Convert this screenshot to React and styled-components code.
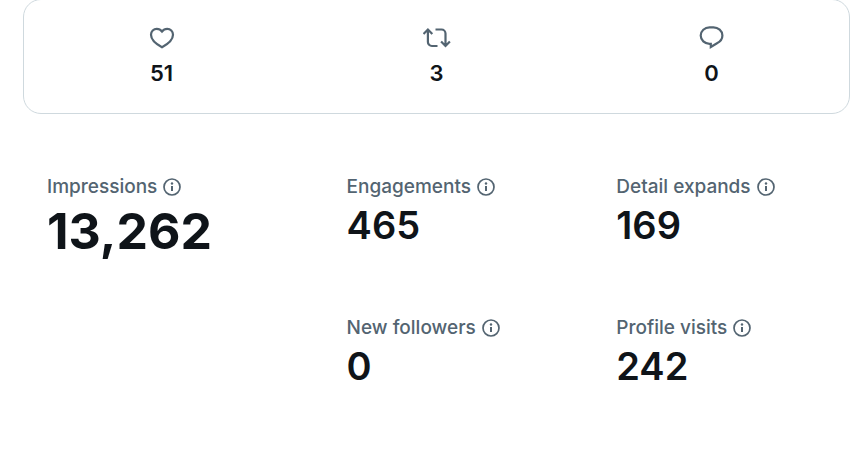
import React from "react"
import styled, { createGlobalStyle, css } from "styled-components"

const colors = {
    text: "#0f1419",
    muted: "#536471",
    border: "#cfd9de",
}

const GlobalStyle = createGlobalStyle`
    * {
        box-sizing: border-box;
    }

    body {
        margin: 0;
        background: #fff;
        color: ${colors.text};
        font-family: Inter, "Liberation Sans", sans-serif;
    }
`

const Page = styled.main`
    display: flow-root;
    padding: 0 18px 48px 23px;
`

const TotalsCard = styled.ul`
    display: grid;
    grid-template-columns: repeat(3, 1fr);
    margin: -1px 0 0;
    padding: 24px 0 26px;
    list-style: none;
    border: 1px solid ${colors.border};
    border-radius: 18px;
`

const Total = styled.li`
    display: flex;
    flex-direction: column;
    align-items: center;
    gap: 7px;
    font-size: 22px;
    font-weight: 600;
    line-height: 28px;
`

const TotalIcon = styled.svg`
    display: block;
    width: 28px;
    height: 28px;
    fill: none;
    stroke: ${colors.muted};
    stroke-width: 2.2;
`

const Metrics = styled.dl`
    display: grid;
    grid-template-columns: 10fr 9fr 7fr;
    row-gap: 66px;
    margin: 0;
    padding: 60px 24px 0;
`

const Metric = styled.div`
    ${({ $large }) =>
        $large &&
        css`
            grid-row: span 2;
        `}
`

const MetricLabel = styled.dt`
    display: flex;
    align-items: center;
    gap: 6px;
    color: ${colors.muted};
    font-size: 19px;
    font-weight: 500;
    line-height: 25px;
    white-space: nowrap;
`

const InfoButton = styled.button`
    display: flex;
    padding: 0;
    border: 0;
    background: none;
    color: inherit;
    cursor: pointer;

    svg {
        width: 18px;
        height: 18px;
    }
`

const MetricValue = styled.dd`
    margin: 2px 0 0;
    font-size: ${({ $large }) => ($large ? "50px" : "38px")};
    font-weight: ${({ $large }) => ($large ? 700 : 600)};
    line-height: ${({ $large }) => ($large ? "60px" : "48px")};
`

const HeartIcon = () => (
    <TotalIcon viewBox="0 0 28 28" role="img" aria-label="Likes">
        <path d="M14 7.500C12.600 5.600 10.800 4.800 8.800 4.800 5.600 4.800 3 7.400 3 10.800c0 5.200 5.500 9.500 11 12.500 5.500-3 11-7.300 11-12.500 0-3.400-2.600-6-5.800-6-2 0-3.800.8-5.200 2.700z" />
    </TotalIcon>
)

const RepostIcon = () => (
    <TotalIcon viewBox="0 0 28 28" role="img" aria-label="Reposts">
        <path d="M.5 10 4.900 5.500l4.400 4.500M4.900 6V18a4 4 0 0 0 4 4H14.500M12.500 5.500h6a4 4 0 0 1 4 4v12M18.100 17.500l4.400 4.500 4.400-4.500" />
    </TotalIcon>
)

const ReplyIcon = () => (
    <TotalIcon viewBox="0 0 28 28" role="img" aria-label="Replies">
        <path d="M11.500 3.300h4c4.600 0 8.900 3.600 8.900 8.200 0 3.400-2.300 6.200-5.400 7.700L12.800 23v-3.200h-1.300C6.700 19.800 2.700 16.100 2.700 11.600s4-8.300 8.800-8.300z" />
    </TotalIcon>
)

const InfoIcon = () => (
    <svg viewBox="0 0 18 18" aria-hidden="true">
        <circle
            cx="9"
            cy="9"
            r="8"
            fill="none"
            stroke="currentColor"
            strokeWidth="1.7"
        />
        <circle cx="9" cy="5.5" r="1.2" fill="currentColor" />
        <path d="M8 8h2v5H8z" fill="currentColor" />
    </svg>
)

const totals = [
    { id: "likes", Icon: HeartIcon, value: "51" },
    { id: "reposts", Icon: RepostIcon, value: "3" },
    { id: "replies", Icon: ReplyIcon, value: "0" },
]

const metrics = [
    { label: "Impressions", value: "13,262", large: true },
    { label: "Engagements", value: "465" },
    { label: "Detail expands", value: "169" },
    { label: "New followers", value: "0" },
    { label: "Profile visits", value: "242" },
]

const App = () => {
    return (
        <>
            <GlobalStyle />
            <Page>
                <TotalsCard>
                    {totals.map(({ id, Icon, value }) => (
                        <Total key={id}>
                            <Icon />
                            <span>{value}</span>
                        </Total>
                    ))}
                </TotalsCard>
                <Metrics>
                    {metrics.map(({ label, value, large }) => (
                        <Metric key={label} $large={large}>
                            <MetricLabel>
                                {label}
                                <InfoButton
                                    type="button"
                                    aria-label={`About ${label}`}
                                >
                                    <InfoIcon />
                                </InfoButton>
                            </MetricLabel>
                            <MetricValue $large={large}>{value}</MetricValue>
                        </Metric>
                    ))}
                </Metrics>
            </Page>
        </>
    )
}

export default App
